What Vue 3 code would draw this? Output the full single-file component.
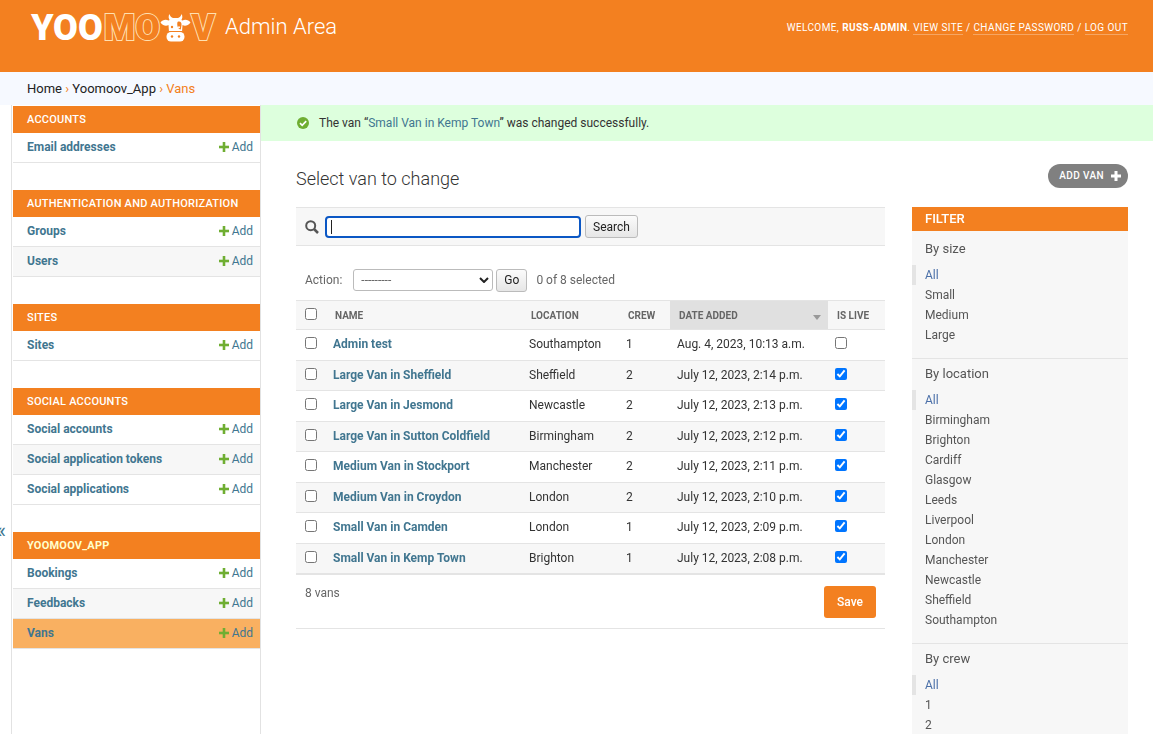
<script setup>
import { ref } from 'vue'

const modules = [
  { name: 'Accounts', models: ['Email addresses'] },
  { name: 'Authentication and Authorization', models: ['Groups', 'Users'] },
  { name: 'Sites', models: ['Sites'] },
  { name: 'Social Accounts', models: ['Social accounts', 'Social application tokens', 'Social applications'] },
  { name: 'Yoomoov_App', models: ['Bookings', 'Feedbacks', 'Vans'], current: true },
]

const vans = ref([
  { name: 'Admin test', location: 'Southampton', crew: 1, date: 'Aug. 4, 2023, 10:13 a.m.', live: false },
  { name: 'Large Van in Sheffield', location: 'Sheffield', crew: 2, date: 'July 12, 2023, 2:14 p.m.', live: true },
  { name: 'Large Van in Jesmond', location: 'Newcastle', crew: 2, date: 'July 12, 2023, 2:13 p.m.', live: true },
  { name: 'Large Van in Sutton Coldfield', location: 'Birmingham', crew: 2, date: 'July 12, 2023, 2:12 p.m.', live: true },
  { name: 'Medium Van in Stockport', location: 'Manchester', crew: 2, date: 'July 12, 2023, 2:11 p.m.', live: true },
  { name: 'Medium Van in Croydon', location: 'London', crew: 2, date: 'July 12, 2023, 2:10 p.m.', live: true },
  { name: 'Small Van in Camden', location: 'London', crew: 1, date: 'July 12, 2023, 2:09 p.m.', live: true },
  { name: 'Small Van in Kemp Town', location: 'Brighton', crew: 1, date: 'July 12, 2023, 2:08 p.m.', live: true },
])

const filters = [
  { title: 'By size', options: ['All', 'Small', 'Medium', 'Large'] },
  {
    title: 'By location',
    options: ['All', 'Birmingham', 'Brighton', 'Cardiff', 'Glasgow', 'Leeds', 'Liverpool', 'London', 'Manchester', 'Newcastle', 'Sheffield', 'Southampton'],
  },
  { title: 'By crew', options: ['All', '1', '2'] },
]

const query = ref('')
</script>

<template>
  <div class="page">
    <header class="header">
      <div class="branding">
        <a href="#" class="logo" aria-label="Yoomoov">
          <span class="solid">YOO</span><span class="outline">MO</span>
          <svg class="cow" viewBox="0 0 31 28" width="31" height="28" aria-hidden="true">
            <path fill="#fff" d="M9.500 0C8 2.500 8.500 5 10.500 7L20.500 7C22.500 5 23 2.500 21.500 0C21 2.500 19.500 3.500 18 4L13 4C11.500 3.500 10 2.500 9.500 0Z" />
            <path fill="#fff" d="M8.500 6.500C6 5 2.500 5.500 0.500 8.500C3 12 6.500 12.500 8.500 11L9 18L22 18L22.500 11C24.500 12.500 28 12 30.500 8.500C28.500 5.500 25 5 22.500 6.500L19 5L12 5Z" />
            <path fill="#f38020" d="M17.500 8C20 6.800 21.800 8.500 21.500 11L20.800 15.500C18.500 15.500 16.500 12 17.500 8Z" />
            <circle cx="12" cy="13" r="1.200" fill="#f38020" />
            <circle cx="19" cy="13.200" r="1" fill="#fff" />
            <rect x="6.500" y="18" width="18" height="9.500" rx="4.500" fill="#fff" />
            <path d="M9 17.500H22" stroke="#f38020" stroke-width="1" />
            <circle cx="12" cy="22.500" r="1.200" fill="#f38020" />
            <circle cx="19" cy="22.500" r="1.200" fill="#f38020" />
          </svg>
          <span class="outline">V</span>
        </a>
        <a href="#" class="site-name">Admin Area</a>
      </div>
      <div class="user-tools">
        Welcome, <strong>Russ-Admin</strong>. <a href="#">View site</a> / <a href="#">Change password</a> / <a href="#">Log out</a>
      </div>
    </header>

    <nav class="breadcrumbs" aria-label="Breadcrumbs">
      <a href="#">Home</a> › <a href="#">Yoomoov_App</a> › Vans
    </nav>

    <div class="main">
      <button class="toggle" aria-label="Toggle navigation"><span>«</span></button>
      <nav class="sidebar" aria-label="Sidebar">
        <section v-for="m in modules" :key="m.name" class="module" :class="{ 'current-app': m.current }">
          <h2><a href="#">{{ m.name }}</a></h2>
          <div v-for="model in m.models" :key="model" class="model" :class="{ 'current-model': model === 'Vans' }">
            <a href="#" class="model-name">{{ model }}</a>
            <a href="#" class="add">
              <svg viewBox="0 0 10 10" width="10" height="10" aria-hidden="true"><path fill="#6fae32" d="M4 0h2v4h4v2H6v4H4V6H0V4h4z" stroke="#6fae32" stroke-width=".6" /></svg>
              Add
            </a>
          </div>
        </section>
      </nav>

      <div class="body">
        <div class="message">
          <svg viewBox="0 0 12 12" width="12" height="12" aria-hidden="true">
            <circle cx="6" cy="6" r="6" fill="#6fae32" />
            <path d="M3 6.200L5.200 8.300L9.200 4.200" fill="none" stroke="#fff" stroke-width="1.700" />
          </svg>
          <p>The van “<a href="#">Small Van in Kemp Town</a>” was changed successfully.</p>
        </div>

        <main class="content">
          <div class="title-row">
            <h1>Select van to change</h1>
            <a href="#" class="add-van">
              Add van
              <svg viewBox="0 0 10 10" width="10" height="10" aria-hidden="true"><path fill="#fff" d="M3.500 0h3v3.500H10v3H6.500V10h-3V6.500H0v-3h3.500z" /></svg>
            </a>
          </div>

          <div class="columns">
            <div class="changelist">
              <form class="search" @submit.prevent>
                <label for="searchbar" aria-label="Search">
                  <svg viewBox="0 0 14 14" width="14" height="14" aria-hidden="true">
                    <circle cx="5.700" cy="5.700" r="4.500" fill="none" stroke="#555" stroke-width="2" />
                    <path d="M9 9L13 13" stroke="#555" stroke-width="2.500" />
                  </svg>
                </label>
                <input id="searchbar" v-model="query" type="text" autofocus />
                <button type="submit">Search</button>
              </form>

              <form @submit.prevent>
                <div class="actions">
                  <label for="action">Action:</label>
                  <div class="select">
                    <select id="action"><option>---------</option></select>
                    <svg viewBox="0 0 10 6" width="10" height="6" aria-hidden="true"><path d="M1 1l4 4 4-4" fill="none" stroke="#222" stroke-width="2" /></svg>
                  </div>
                  <button type="button">Go</button>
                  <span class="counter">0 of 8 selected</span>
                </div>

                <table>
                  <colgroup><col class="c-check" /><col /><col class="c-loc" /><col class="c-crew" /><col class="c-date" /><col class="c-live" /></colgroup>
                  <thead>
                    <tr>
                      <th><input type="checkbox" aria-label="Select all vans" /></th>
                      <th><a href="#">Name</a></th>
                      <th><a href="#">Location</a></th>
                      <th><a href="#">Crew</a></th>
                      <th class="sorted">
                        <div><a href="#">Date added</a><svg viewBox="0 0 8 5" width="8" height="5" aria-hidden="true"><path d="M0 0h8L4 5z" fill="#999" /></svg></div>
                      </th>
                      <th><a href="#">Is live</a></th>
                    </tr>
                  </thead>
                  <tbody>
                    <tr v-for="v in vans" :key="v.name">
                      <td><input type="checkbox" :aria-label="'Select ' + v.name" /></td>
                      <td><a href="#">{{ v.name }}</a></td>
                      <td>{{ v.location }}</td>
                      <td>{{ v.crew }}</td>
                      <td>{{ v.date }}</td>
                      <td><input v-model="v.live" type="checkbox" :aria-label="v.name + ' is live'" /></td>
                    </tr>
                  </tbody>
                </table>

                <div class="paginator">
                  <span>8 vans</span>
                  <button type="submit" class="save">Save</button>
                </div>
              </form>
            </div>

            <aside class="filter">
              <h2>Filter</h2>
              <section v-for="f in filters" :key="f.title">
                <h3>{{ f.title }}</h3>
                <ul>
                  <li v-for="(o, i) in f.options" :key="o" :class="{ selected: i === 0 }"><a href="#">{{ o }}</a></li>
                </ul>
              </section>
            </aside>
          </div>
        </main>
      </div>
    </div>
  </div>
</template>

<style>
body {
  margin: 0;
  background: #fff;
}
</style>

<style scoped>
.page {
  display: flex;
  flex-direction: column;
  min-height: 100vh;
  font: 12px/18px Roboto, "Liberation Sans", sans-serif;
  color: #333;
}
.page * {
  box-sizing: border-box;
}
a {
  color: #417690;
  text-decoration: none;
}
h1, h2, h3, p, ul {
  margin: 0;
  padding: 0;
  font-weight: 400;
}
button, input, select {
  font: inherit;
  color: inherit;
  margin: 0;
}
.header {
  display: flex;
  justify-content: space-between;
  align-items: flex-start;
  height: 72px;
  padding: 8px 25px 0 31px;
  background: #f38020;
  color: #fff;
}
.branding {
  display: flex;
  align-items: center;
  gap: 10px;
}
.logo {
  display: flex;
  align-items: center;
  height: 40px;
  font: 900 36px/40px Roboto, sans-serif;
  color: #fff;
}
.solid {
  margin-right: 1px;
}
.outline {
  color: #f38020;
  -webkit-text-stroke: 2px #ffe0b0;
  paint-order: stroke fill;
}
.site-name {
  font-size: 22px;
  font-weight: 300;
  line-height: 36px;
  padding-bottom: 2px;
  color: #fff;
}
.user-tools {
  padding-top: 12px;
  font-size: 10px;
  letter-spacing: 0.04em;
  line-height: 16px;
  text-transform: uppercase;
}
.user-tools a {
  display: inline-block;
  line-height: 13px;
  color: #fff;
  border-bottom: 1px solid rgba(255, 255, 255, 0.3);
}
.breadcrumbs {
  height: 33px;
  padding: 8px 27px;
  background: #f6f9ff;
  color: #f38020;
  font-size: 13px;
}
.breadcrumbs a {
  color: #222;
}
.main {
  display: flex;
  flex: 1;
}
.toggle {
  display: flex;
  justify-content: flex-end;
  width: 12px;
  padding: 417px 5px 0 0;
  border: 0;
  border-right: 1px solid #e2e2e2;
  background: #fff;
  color: #417690;
  font-size: 22px;
  line-height: 18px;
  overflow: hidden;
}
.sidebar {
  width: 249px;
  padding: 1px 0 0 1px;
  border-right: 1px solid #e2e2e2;
  flex: none;
}
.module {
  margin-bottom: 27px;
}
.module h2 {
  padding: 0 14px;
  background: #f38020;
  font-size: 11px;
  font-weight: 500;
  letter-spacing: 0.02em;
  line-height: 27px;
  text-transform: uppercase;
}
.module h2 a {
  color: #fff;
}
.module.current-app h2 {
  font-weight: 700;
}
.module.current-app h2 a {
  color: #ffc;
}
.model {
  display: flex;
  justify-content: space-between;
  padding: 5px 7px 6px 14px;
  border-bottom: 1px solid #e4e4e4;
}
.model:nth-child(odd) {
  background: #f7f7f7;
}
.model.current-model {
  background: #f9b061;
}
.model-name {
  font-weight: 700;
}
.add {
  display: flex;
  align-items: center;
  gap: 3px;
}
.body {
  display: flex;
  flex-direction: column;
  flex: 1;
  min-width: 0;
}
.message {
  display: flex;
  align-items: center;
  gap: 10px;
  height: 36px;
  padding-left: 36px;
  background: #dfd;
}
.content {
  display: flex;
  flex-direction: column;
  flex: 1;
  padding: 23px 25px 0 35px;
}
.title-row {
  display: flex;
  justify-content: space-between;
  align-items: flex-start;
  height: 43px;
}
h1 {
  font-size: 18px;
  font-weight: 300;
  line-height: 30px;
}
.add-van {
  display: flex;
  align-items: center;
  gap: 7px;
  height: 24px;
  padding: 0 7px 0 11px;
  border-radius: 12px;
  background: #808080;
  color: #fff;
  font-size: 10px;
  font-weight: 500;
  letter-spacing: 0.04em;
  text-transform: uppercase;
}
.columns {
  display: flex;
  flex: 1;
  gap: 27px;
}
.changelist {
  flex: 1;
  min-width: 0;
}
.search {
  display: flex;
  align-items: center;
  height: 39px;
  padding-left: 9px;
  border: solid #e4e4e4;
  border-width: 1px 0;
  background: #f7f7f7;
}
.search label {
  display: flex;
  margin-right: 6px;
}
.search input {
  width: 256px;
  height: 22px;
  margin-right: 4px;
  padding: 0 4px;
  border: 2px solid #0b57c4;
  border-radius: 4px;
  background: linear-gradient(#222, #222) 4px center / 1px 14px no-repeat #fff;
  caret-color: transparent;
  outline: 0;
}
.search button, .actions button {
  height: 23px;
  padding: 0 7px;
  border: 1px solid #bbb;
  border-radius: 3px;
  background: linear-gradient(#fbfbfb, #e6e6e6);
  color: #222;
}
.actions {
  display: flex;
  align-items: center;
  height: 54px;
  padding: 14px 9px 0;
  color: #666;
}
.actions label {
  margin-right: 11px;
}
.select {
  display: grid;
  align-items: center;
  margin-right: 3px;
}
.select > * {
  grid-area: 1 / 1;
}
.select svg {
  justify-self: end;
  margin-right: 4px;
  pointer-events: none;
}
select {
  appearance: none;
  width: 140px;
  height: 22px;
  padding: 0 7px;
  border: 1px solid #bbb;
  border-radius: 3px;
  background: #fff;
}
.counter {
  margin-left: 9px;
}
table {
  width: 100%;
  border-spacing: 0;
  table-layout: fixed;
  border-bottom: 1px solid #e4e4e4;
}
.c-check { width: 30px; }
.c-loc { width: 97px; }
.c-crew { width: 51px; }
.c-date { width: 158px; }
.c-live { width: 57px; }
th {
  height: 30px;
  padding: 2px 9px 0;
  border: solid #e4e4e4;
  border-width: 1px 0;
  background: #f7f7f7;
  font-size: 10px;
  font-weight: 700;
  line-height: 16px;
  text-align: left;
  text-transform: uppercase;
}
th:first-child {
  padding: 0 9px 3px;
}
th a {
  color: #666;
}
.sorted {
  padding-right: 7px;
  background: #e0e0e0;
}
.sorted div {
  display: flex;
  align-items: center;
  justify-content: space-between;
}
.sorted svg {
  margin-top: 3px;
}
td {
  height: 30px;
  padding: 0 7px 2px;
  border-bottom: 1px solid #e4e4e4;
}
tr:nth-child(odd) td {
  height: 31px;
}
tr:nth-child(even) td {
  background: #f7f7f7;
}
td:first-child {
  padding-left: 9px;
}
td:first-child, td:last-child {
  padding-bottom: 4px;
}
td a {
  font-weight: 700;
}
td input, th input {
  display: block;
  width: 12px;
  height: 12px;
}
.paginator {
  display: flex;
  justify-content: space-between;
  align-items: flex-start;
  height: 54px;
  padding: 11px 9px;
  border-bottom: 1px solid #e4e4e4;
  color: #666;
}
.paginator span {
  line-height: 14px;
}
.save {
  height: 32px;
  padding: 0 13px;
  border: 0;
  border-radius: 3px;
  background: #f38020;
  color: #fff;
  font-weight: 500;
}
.filter {
  width: 216px;
  flex: none;
  background: #f7f7f7;
}
.filter h2 {
  margin-bottom: 3px;
  padding: 0 13px;
  background: #f38020;
  color: #fff;
  font-size: 13px;
  font-weight: 500;
  line-height: 24px;
  text-transform: uppercase;
}
.filter section {
  padding: 6px 0 13px;
  border-bottom: 1px solid #e4e4e4;
}
.filter section:last-child {
  padding-bottom: 0;
  border-bottom: 0;
}
.filter h3 {
  margin-bottom: 7px;
  padding: 0 13px;
  font-size: 13px;
  color: #555;
}
.filter ul {
  list-style: none;
}
.filter li {
  padding-left: 13px;
  line-height: 20px;
}
.filter li a {
  color: #555;
}
.filter .selected {
  padding-left: 9px;
  border-left: 4px solid #e4e4e4;
}
.filter .selected a {
  color: #4a6fa8;
}
</style>
